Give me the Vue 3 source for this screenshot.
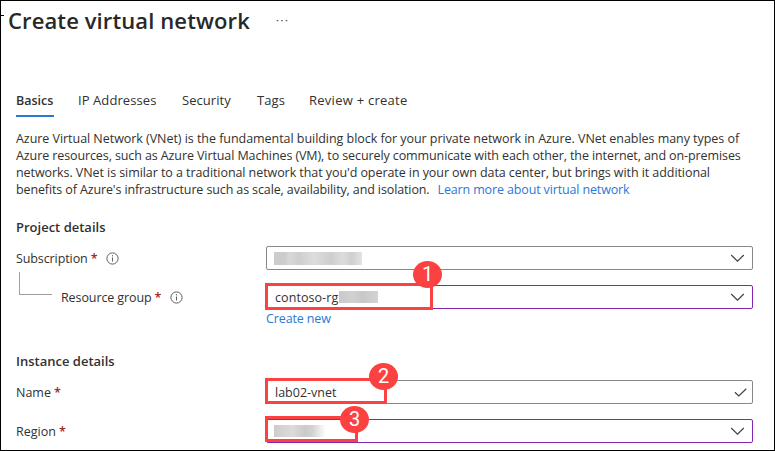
<script setup>
const tabs = [
  { label: 'Basics', key: 'basics', active: true },
  { label: 'IP Addresses', key: 'ip' },
  { label: 'Security', key: 'security' },
  { label: 'Tags', key: 'tags' },
  { label: 'Review + create', key: 'review' },
]
const lines = [
  'Azure Virtual Network (VNet) is the fundamental building block for your private network in Azure. VNet enables many types of',
  'Azure resources, such as Azure Virtual Machines (VM), to securely communicate with each other, the internet, and on-premises',
  "networks. VNet is similar to a traditional network that you'd operate in your own data center, but brings with it additional",
]
</script>

<template>
  <main class="page">
    <span class="tick"></span>
    <header class="head">
      <h1>Create virtual network</h1>
      <svg class="more" width="12" height="3" viewBox="0 0 12 3"><path d="M.7 1h1.6v1.3H.7zM5.2 1h1.6v1.3H5.2zM9.7 1h1.6v1.3H9.7z" fill="#605e5c" /></svg>
    </header>

    <nav class="tabs">
      <a v-for="t in tabs" :key="t.key" :class="['tab', t.key, { active: t.active }]"><span>{{ t.label }}</span></a>
    </nav>

    <div class="intro">
      <p v-for="(l, i) in lines" :key="i" :class="'line' + i">{{ l }}</p>
      <p class="line3"><span>benefits of Azure's infrastructure such as scale, availability, and isolation.</span><a class="learn">Learn more about virtual network</a></p>
    </div>

    <h2 class="project">Project details</h2>
    <div class="row subscription">
      <label><span class="t-sub">Subscription</span><b class="req">*</b>
        <svg class="info" width="13" height="13" viewBox="0 0 13 13"><circle cx="6.5" cy="6.5" r="5.6" /><path d="M6.5 5.5v4M6.5 3.2v1.2" /></svg>
      </label>
      <div class="field">
        <span class="blur wide"></span>
        <svg class="chev" width="14" height="8" viewBox="0 0 14 8"><path d="M1.2 1L7.5 7.2L13.8 1" /></svg>
      </div>
    </div>
    <div class="row group">
      <label><i class="elbow"></i><span class="t-group">Resource group</span><b class="req">*</b>
        <svg class="info" width="13" height="13" viewBox="0 0 13 13"><circle cx="6.5" cy="6.5" r="5.6" /><path d="M6.5 5.5v4M6.5 3.2v1.2" /></svg>
      </label>
      <div class="field purple">
        <span class="t-rg">contoso-rg</span><span class="blur mid"></span>
        <svg class="chev" width="14" height="8" viewBox="0 0 14 8"><path d="M1.2 1L7.5 7.2L13.8 1" /></svg>
        <span class="mark m1"><em>1</em></span>
      </div>
    </div>
    <a class="create">Create new</a>

    <h2 class="instance">Instance details</h2>
    <div class="row name">
      <label><span class="t-name">Name</span><b class="req">*</b></label>
      <div class="field">
        <span class="t-vnet">lab02-vnet</span>
        <svg class="check" width="13" height="9" viewBox="0 0 13 9"><path d="M.9 4.2L4.8 8L12.3 .7" /></svg>
        <span class="mark m2"><em>2</em></span>
      </div>
    </div>
    <div class="row region">
      <label><span class="t-region">Region</span><b class="req">*</b></label>
      <div class="field purple">
        <span class="blur small"></span>
        <svg class="chev" width="14" height="8" viewBox="0 0 14 8"><path d="M1.2 1L7.5 7.2L13.8 1" /></svg>
        <span class="mark m3"><em>3</em></span>
      </div>
    </div>
  </main>
</template>

<style>
body { margin: 0; background: #fff; }
</style>

<style scoped>
* { box-sizing: border-box; }
.page {
  position: relative; width: 775px; height: 451px; overflow: hidden;
  border: 1px solid #000; background: #fff; color: #323130;
  font: 12.5px/17px "Open Sans", "Noto Sans", sans-serif; white-space: nowrap;
}
h1, h2, p { margin: 0; }
.tick { position: absolute; left: 0; top: 14px; width: 3px; height: 1px; background: #000; }
.head { display: flex; height: 79px; padding-left: 7px; }
h1 { width: 268px; height: 38px; font-size: 22px; line-height: 38px; font-weight: 600; letter-spacing: .11px; color: #292827; }
.more { margin-top: 18px; }
.tabs { display: flex; height: 37px; padding-left: 15px; font-size: 13px; }
.tab { height: 37px; line-height: 41px; margin-right: 24px; }
.tab.active { font-size: 12.5px; font-weight: 600; border-bottom: 2px solid #2b78d4; }
.basics { width: 38px; }
.ip { width: 80px; letter-spacing: .08px; }
.security { width: 51px; letter-spacing: .05px; }
.tags { width: 28px; letter-spacing: .1px; }
.review { letter-spacing: .26px; }
.intro { padding: 13px 0 0 15px; height: 92px; }
.intro p { height: 17px; }
.line0 { letter-spacing: -.044px; }
.line1 { letter-spacing: -.1px; }
.line2 { letter-spacing: -.07px; }
.line3 { letter-spacing: -.12px; }
a.learn, .create { color: #2b78d4; }
.learn { margin-left: 8px; letter-spacing: -.14px; }
h2 { font-size: 13px; line-height: 18px; font-weight: 600; padding-left: 15px; }
.project { margin-top: 9px; height: 28px; }
.row { display: flex; height: 24px; }
.group { margin-top: 15px; }
.row label { display: flex; align-items: center; width: 265px; padding-left: 15px; }
.t-sub { letter-spacing: -.1px; }
.t-group { letter-spacing: -.1px; }
.req { color: #a4262c; font-weight: 600; margin-left: 3px; }
.info { margin-left: 9px; fill: none; stroke: #605e5c; stroke-width: 1; }
.elbow { width: 33px; height: 23px; margin: -27px 9px 0 3px; border: solid #a19f9d; border-width: 0 0 1px 1px; }
.field { position: relative; display: flex; align-items: center; width: 487px; height: 24px; padding: 0 8px; border: 1px solid #8a8886; border-radius: 2px; }
.field.purple { border-color: #8527ad; }
.t-rg { width: 64px; letter-spacing: .07px; }
.chev, .check { margin-left: auto; fill: none; stroke: #444; stroke-width: 1.2; }
.check { margin-right: -3px; }
.blur { height: 13px; }
.wide { width: 88px; margin-left: -1px; background: linear-gradient(90deg, #cdcccc 0 12%, #dad9d9 18%, #cfcece 28%, #deddde 45%, #cfcecf 65%, #dedddd 78%, #d0cfcf 88%, #e4e3e3); }
.mid { width: 39px; height: 12px; background: linear-gradient(90deg, #c9c8ca, #d2d1d2 35%, #c8c7c9 60%, #d5d4d5); }
.small { width: 52px; height: 12px; margin-left: -1px; background: linear-gradient(90deg, #cecbcb, #dcdadb 35%, #cbc9c9 60%, #d5d4d5 75%, #fff); }
.create { display: block; margin-top: 1px; height: 18px; padding-left: 265px; letter-spacing: -.12px; }
.instance { margin-top: 24px; height: 28px; }
.region { margin-top: 15px; }
.mark { position: absolute; left: -2px; border: 3px solid #fb4141; }
.mark em {
  position: absolute; width: 29px; height: 27px; border-radius: 50%; background: #fb4141;
  color: #fff; font: 20px/27px Roboto, sans-serif; text-align: center;
}
.m1 { top: -3px; width: 168px; height: 27px; }
.m1 em { left: 145px; top: -25px; }
.m2 { top: -3px; width: 122px; height: 26px; }
.m2 em { left: 101px; top: -18px; }
.m3 { top: -4px; width: 93px; height: 26px; }
.m3 em { left: 72px; top: -13px; }
</style>
